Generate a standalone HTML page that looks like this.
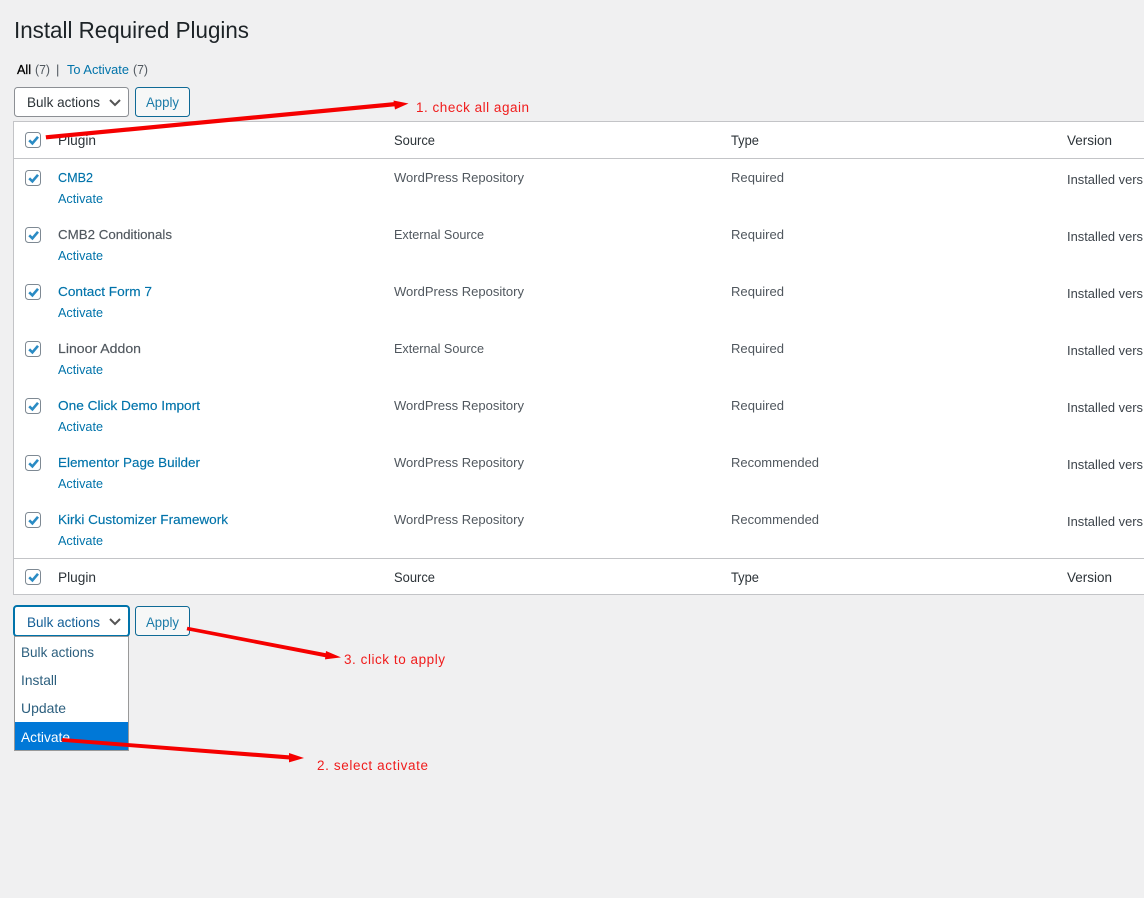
<!DOCTYPE html>
<html lang="en">
<head>
<meta charset="utf-8">
<title>Install Required Plugins</title>
<style>
html,body{margin:0;padding:0;background:#f0f0f1;width:1144px;height:898px;overflow:hidden}
svg{display:block;font-family:"Liberation Sans",sans-serif}
text{font-size:13px;fill:#50575e}
.h{fill:#2c3338;font-size:14px}
.l{fill:#0073aa}
.n{font-size:13px;stroke-width:.15px;fill:#0073aa;stroke:#0073aa}
.g{font-size:13px;stroke-width:.15px;fill:#50575e;stroke:#50575e}
.r{fill:#f01c1c;font-size:13.5px}
.box{fill:#fff;stroke:#7e8993;stroke-width:1}
.chk{fill:none;stroke:#2a8bc4;stroke-width:2.6}
.c{fill:none;stroke:#555;stroke-width:2}
</style>
</head>
<body>
<svg width="1144" height="898" viewBox="0 0 1144 898" xmlns="http://www.w3.org/2000/svg">
<defs>
<g id="cb">
<rect class="box" x="-7.5" y="-7.5" width="15" height="15" rx="3"/>
<path class="chk" d="M-3.8 .3L-.6 3.4L5 -3.2"/>
</g>
</defs>

<text x="14" y="38" textLength="235" lengthAdjust="spacingAndGlyphs" style="font-size:23px;fill:#1d2327">Install Required Plugins</text>

<text x="17" y="74" textLength="14" lengthAdjust="spacingAndGlyphs" style="font-size:13px;fill:#000;stroke:#000;stroke-width:.3px">All</text>
<text x="35" y="74" textLength="15" lengthAdjust="spacingAndGlyphs" style="fill:#50575e">(7)</text>
<text x="56" y="74" style="fill:#50575e">|</text>
<text x="67" y="74" textLength="62" lengthAdjust="spacingAndGlyphs" class="l">To Activate</text>
<text x="133" y="74" textLength="15" lengthAdjust="spacingAndGlyphs" style="fill:#50575e">(7)</text>

<rect x="14.5" y="87.5" width="114" height="29" rx="3" fill="#fff" stroke="#8c8f94"/>
<text x="27" y="107" textLength="73" lengthAdjust="spacingAndGlyphs" style="font-size:14px;fill:#2c3338">Bulk actions</text>
<path class="c" d="M110 100L115 105L120 100"/>
<rect x="135.5" y="87.5" width="54" height="29" rx="3" fill="#f6f7f7" stroke="#0f6a96"/>
<text x="146" y="107" textLength="33" lengthAdjust="spacingAndGlyphs" style="font-size:14px;fill:#1b7ba8">Apply</text>

<rect x="13.5" y="121.5" width="1140" height="473" fill="#fff" stroke="#c3c4c7"/>
<line x1="14" y1="158.5" x2="1144" y2="158.5" stroke="#c3c4c7"/>
<line x1="14" y1="558.5" x2="1144" y2="558.5" stroke="#c3c4c7"/>

<use href="#cb" x="33" y="140"/>
<text class="h" x="58" y="145" textLength="38" lengthAdjust="spacingAndGlyphs">Plugin</text>
<text class="h" x="394" y="145" textLength="41" lengthAdjust="spacingAndGlyphs">Source</text>
<text class="h" x="731" y="145" textLength="28" lengthAdjust="spacingAndGlyphs">Type</text>
<text class="h" x="1067" y="145" textLength="45" lengthAdjust="spacingAndGlyphs">Version</text>

<use href="#cb" x="33" y="178"/>
<text class="n" x="58" y="182" textLength="35" lengthAdjust="spacingAndGlyphs">CMB2</text>
<text class="l" x="58" y="203" textLength="45" lengthAdjust="spacingAndGlyphs">Activate</text>
<text x="394" y="182" textLength="130" lengthAdjust="spacingAndGlyphs">WordPress Repository</text>
<text x="731" y="182" textLength="53" lengthAdjust="spacingAndGlyphs">Required</text>
<text x="1067" y="184" textLength="76" lengthAdjust="spacingAndGlyphs" style="fill:#3c434a">Installed vers</text>

<use href="#cb" x="33" y="235"/>
<text class="g" x="58" y="239" textLength="114" lengthAdjust="spacingAndGlyphs">CMB2 Conditionals</text>
<text class="l" x="58" y="260" textLength="45" lengthAdjust="spacingAndGlyphs">Activate</text>
<text x="394" y="239" textLength="90" lengthAdjust="spacingAndGlyphs">External Source</text>
<text x="731" y="239" textLength="53" lengthAdjust="spacingAndGlyphs">Required</text>
<text x="1067" y="241" textLength="76" lengthAdjust="spacingAndGlyphs" style="fill:#3c434a">Installed vers</text>

<use href="#cb" x="33" y="292"/>
<text class="n" x="58" y="296" textLength="94" lengthAdjust="spacingAndGlyphs">Contact Form 7</text>
<text class="l" x="58" y="317" textLength="45" lengthAdjust="spacingAndGlyphs">Activate</text>
<text x="394" y="296" textLength="130" lengthAdjust="spacingAndGlyphs">WordPress Repository</text>
<text x="731" y="296" textLength="53" lengthAdjust="spacingAndGlyphs">Required</text>
<text x="1067" y="298" textLength="76" lengthAdjust="spacingAndGlyphs" style="fill:#3c434a">Installed vers</text>

<use href="#cb" x="33" y="349"/>
<text class="g" x="58" y="353" textLength="83" lengthAdjust="spacingAndGlyphs">Linoor Addon</text>
<text class="l" x="58" y="374" textLength="45" lengthAdjust="spacingAndGlyphs">Activate</text>
<text x="394" y="353" textLength="90" lengthAdjust="spacingAndGlyphs">External Source</text>
<text x="731" y="353" textLength="53" lengthAdjust="spacingAndGlyphs">Required</text>
<text x="1067" y="355" textLength="76" lengthAdjust="spacingAndGlyphs" style="fill:#3c434a">Installed vers</text>

<use href="#cb" x="33" y="406"/>
<text class="n" x="58" y="410" textLength="142" lengthAdjust="spacingAndGlyphs">One Click Demo Import</text>
<text class="l" x="58" y="431" textLength="45" lengthAdjust="spacingAndGlyphs">Activate</text>
<text x="394" y="410" textLength="130" lengthAdjust="spacingAndGlyphs">WordPress Repository</text>
<text x="731" y="410" textLength="53" lengthAdjust="spacingAndGlyphs">Required</text>
<text x="1067" y="412" textLength="76" lengthAdjust="spacingAndGlyphs" style="fill:#3c434a">Installed vers</text>

<use href="#cb" x="33" y="463"/>
<text class="n" x="58" y="467" textLength="142" lengthAdjust="spacingAndGlyphs">Elementor Page Builder</text>
<text class="l" x="58" y="488" textLength="45" lengthAdjust="spacingAndGlyphs">Activate</text>
<text x="394" y="467" textLength="130" lengthAdjust="spacingAndGlyphs">WordPress Repository</text>
<text x="731" y="467" textLength="88" lengthAdjust="spacingAndGlyphs">Recommended</text>
<text x="1067" y="469" textLength="76" lengthAdjust="spacingAndGlyphs" style="fill:#3c434a">Installed vers</text>

<use href="#cb" x="33" y="520"/>
<text class="n" x="58" y="524" textLength="170" lengthAdjust="spacingAndGlyphs">Kirki Customizer Framework</text>
<text class="l" x="58" y="545" textLength="45" lengthAdjust="spacingAndGlyphs">Activate</text>
<text x="394" y="524" textLength="130" lengthAdjust="spacingAndGlyphs">WordPress Repository</text>
<text x="731" y="524" textLength="88" lengthAdjust="spacingAndGlyphs">Recommended</text>
<text x="1067" y="526" textLength="76" lengthAdjust="spacingAndGlyphs" style="fill:#3c434a">Installed vers</text>

<use href="#cb" x="33" y="577"/>
<text class="h" x="58" y="582" textLength="38" lengthAdjust="spacingAndGlyphs">Plugin</text>
<text class="h" x="394" y="582" textLength="41" lengthAdjust="spacingAndGlyphs">Source</text>
<text class="h" x="731" y="582" textLength="28" lengthAdjust="spacingAndGlyphs">Type</text>
<text class="h" x="1067" y="582" textLength="45" lengthAdjust="spacingAndGlyphs">Version</text>

<rect x="14" y="606" width="115" height="30" rx="3" fill="#fff" stroke="#0073aa" stroke-width="2"/>
<text x="27" y="627" textLength="73" lengthAdjust="spacingAndGlyphs" style="font-size:14px;fill:#135e96">Bulk actions</text>
<path class="c" d="M110 619L115 624L120 619"/>
<rect x="135.5" y="606.5" width="54" height="29" rx="3" fill="#f6f7f7" stroke="#0f6a96"/>
<text x="146" y="627" textLength="33" lengthAdjust="spacingAndGlyphs" style="font-size:14px;fill:#1b7ba8">Apply</text>

<rect x="14.5" y="636.5" width="114" height="114" fill="#fff" stroke="#999"/>
<rect x="15" y="722" width="113" height="28" fill="#0078d7"/>
<text x="21" y="657" textLength="73" lengthAdjust="spacingAndGlyphs" style="font-size:14px;fill:#2c5f7e">Bulk actions</text>
<text x="21" y="685" textLength="36" lengthAdjust="spacingAndGlyphs" style="font-size:14px;fill:#2c5f7e">Install</text>
<text x="21" y="713" textLength="45" lengthAdjust="spacingAndGlyphs" style="font-size:14px;fill:#2c5f7e">Update</text>
<text x="21" y="742" textLength="49" lengthAdjust="spacingAndGlyphs" style="font-size:14px;fill:#fff">Activate</text>

<g fill="#f50000" stroke="none">
<polygon points="45.6,135.2 395,102 395.4,106.2 46.2,139.4"/>
<polygon points="393.5,100.5 408.5,103.5 395,109.5"/>
<polygon points="187.4,626.8 330,654 329.2,658 186.6,630.2"/>
<polygon points="326,651 341,657.4 325,659.4"/>
<polygon points="62,738 293,755.6 292.6,759.8 61.6,741.8"/>
<polygon points="289,753 304,758 289,762.4"/>
</g>

<text class="r" x="416" y="112" textLength="113" lengthAdjust="spacing">1. check all again</text>
<text class="r" x="344" y="664" textLength="101" lengthAdjust="spacing">3. click to apply</text>
<text class="r" x="317" y="770" textLength="111" lengthAdjust="spacing">2. select activate</text>
</svg>
</body>
</html>
